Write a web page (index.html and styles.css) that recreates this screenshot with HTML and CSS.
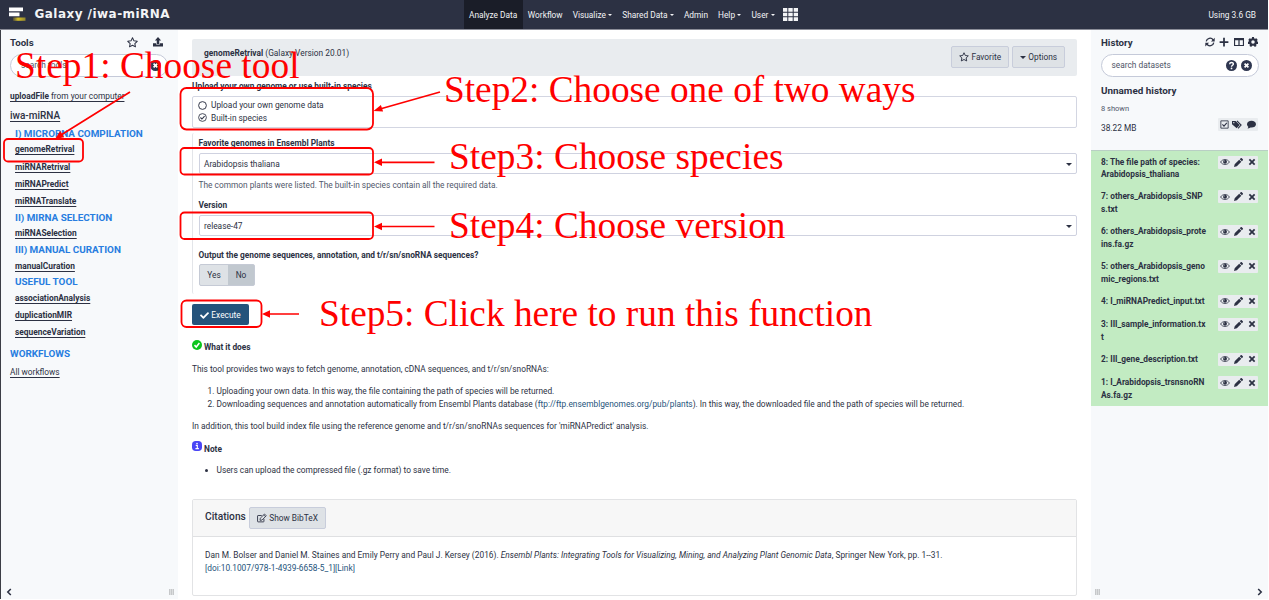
FILE: index.html
```html
<!DOCTYPE html>
<html lang="en">
<head>
<meta charset="utf-8">
<title>Galaxy /iwa-miRNA</title>
<link rel="stylesheet" href="styles.css">
</head>
<body>
<svg class="defs" width="0" height="0" aria-hidden="true">
  <symbol id="star" viewBox="0 0 16 16"><path d="M8 1.2l2.100 4.400 4.800.6-3.500 3.300.9 4.800L8 12l-4.300 2.300.9-4.800L1.100 6.200l4.800-.6z" fill="none" stroke="currentColor" stroke-width="1.500" stroke-linejoin="round"/></symbol>
  <symbol id="upload" viewBox="0 0 16 16"><path d="M8 0l5 5.500H10V11H6V5.500H3zM0 10h5v2h6v-2h5v5H0z" fill="currentColor"/></symbol>
  <symbol id="times-circle" viewBox="0 0 16 16"><path d="M8 0a8 8 0 100 16A8 8 0 008 0zM4.300 6.100l1.800-1.800L8 6.200l1.900-1.900 1.800 1.800L9.800 8l1.900 1.900-1.800 1.800L8 9.800l-1.900 1.900-1.800-1.800L6.200 8z" fill="currentColor" fill-rule="evenodd"/></symbol>
  <symbol id="question" viewBox="0 0 16 16"><circle cx="8" cy="8" r="8" fill="currentColor"/><path d="M5.300 6.200C5.400 2.700 10.800 2.900 10.700 6 10.600 7.700 8 7.600 8 9.800" fill="none" stroke="#fff" stroke-width="2"/><circle cx="8" cy="12.300" r="1.300" fill="#fff"/></symbol>
  <symbol id="refresh" viewBox="0 0 16 16"><path d="M2 7a6.100 6.100 0 0111-2.500M14 9a6.100 6.100 0 01-11 2.500" fill="none" stroke="currentColor" stroke-width="2.100"/><path d="M15.500 1v6H9.500zM.5 15V9h6z" fill="currentColor"/></symbol>
  <symbol id="plus" viewBox="0 0 16 16"><path d="M6.600 1h2.800v5.600H15v2.800H9.400V15H6.600V9.400H1V6.600h5.600z" fill="currentColor"/></symbol>
  <symbol id="columns" viewBox="0 0 16 16"><path d="M0 1.500h16v13H0zM1.800 5.300v7.400H7V5.300zM9 5.300v7.400h5.200V5.300z" fill="currentColor" fill-rule="evenodd"/></symbol>
  <symbol id="cog" viewBox="0 0 16 16"><path d="M6.500 0h3l.5 2.200 1.400.7 2-1 2 2.300-1 2 .3 1 2 .8-.8 3-2 .3-.9 1.200.5 2-2.500 1.400L9.300 14H6.700L5 15.900l-2.500-1.400.5-2-.9-1.200-2-.3-.8-3 2-.8.3-1-1-2 2-2.300 2 1L6 2.200zM8 5.200a2.800 2.800 0 100 5.600 2.800 2.800 0 000-5.600z" fill="currentColor" fill-rule="evenodd"/></symbol>
  <symbol id="check-square" viewBox="0 0 16 16"><path d="M1.500 1.500h13v13h-13z" fill="none" stroke="currentColor" stroke-width="1.500"/><path d="M4.300 7.800l2.800 3 5-5.800" fill="none" stroke="currentColor" stroke-width="1.900"/></symbol>
  <symbol id="tags" viewBox="0 0 20 16"><path d="M0 1.500h6.500L14 9l-5.500 6L0 7.500zM3.300 3.300a1.300 1.300 0 100 2.600 1.300 1.300 0 000-2.600z" fill="currentColor" fill-rule="evenodd"/><path d="M9 1.500L16.500 9 11 15" fill="none" stroke="currentColor" stroke-width="2"/></symbol>
  <symbol id="comment" viewBox="0 0 16 16"><path d="M8 1.500c4.400 0 8 2.600 8 6s-3.600 6-8 6l-1.700-.2C4.600 14.600 2.500 15.200.8 15.200c1-1 1.500-2.200 1.500-3.400C.9 10.700 0 9.200 0 7.500c0-3.400 3.600-6 8-6z" fill="currentColor"/></symbol>
  <symbol id="eye" viewBox="0 0 18 14"><path d="M1 7c3.700-6 12.300-6 16 0-3.700 6-12.300 6-16 0z" fill="none" stroke="currentColor" stroke-width="1.400"/><circle cx="9" cy="6.500" r="3.500" fill="currentColor"/><path d="M7.300 6.300A1.800 1.800 0 019 4.600" fill="none" stroke="#e9ecef" stroke-width=".9"/></symbol>
  <symbol id="pencil" viewBox="0 0 16 16"><path d="M0 16l1.200-5 8-8 3.800 3.800-8 8zM10.200 2L12 .3c.7-.6 1.300-.4 1.800 0l1.900 1.900c.5.600.4 1.300 0 1.800L14 5.800z" fill="currentColor"/></symbol>
  <symbol id="times" viewBox="0 0 16 16"><path d="M4 1.500l4 4 4-4L14.500 4l-4 4 4 4-2.500 2.500-4-4-4 4L1.500 12l4-4-4-4z" fill="currentColor"/></symbol>
  <symbol id="check" viewBox="0 0 512 512"><path d="M173.900 439.400L7.500 273c-10-10-10-26.200 0-36.200l36.200-36.200c10-10 26.200-10 36.200 0L192 312.700 432.100 72.600c10-10 26.200-10 36.200 0l36.200 36.200c10 10 10 26.200 0 36.200L210.100 439.400c-10 10-26.200 10-36.200 0z" fill="currentColor"/></symbol>
  <symbol id="circle" viewBox="0 0 16 16"><circle cx="8" cy="8" r="6.900" fill="none" stroke="currentColor" stroke-width="1.700"/></symbol>
  <symbol id="circle-check" viewBox="0 0 16 16"><circle cx="8" cy="8" r="6.900" fill="none" stroke="currentColor" stroke-width="1.500"/><path d="M4.300 8l2.700 2.700 4.700-5" fill="none" stroke="currentColor" stroke-width="1.900"/></symbol>
  <symbol id="edit" viewBox="0 0 18 16"><path d="M12.500 9.500V14a1 1 0 01-1 1H2a1 1 0 01-1-1V4.500a1 1 0 011-1h6.500" fill="none" stroke="currentColor" stroke-width="1.600"/><path d="M5.800 8.500L13.500.8l3.200 3.200L9 11.700l-3.500.5z" fill="none" stroke="currentColor" stroke-width="1.500"/><path d="M12 2.400L15 5.500" stroke="currentColor" stroke-width="1.500"/></symbol>
  <symbol id="ok" viewBox="0 0 16 16"><circle cx="8" cy="8" r="8" fill="#0bc51c"/><path d="M4 8.200l2.800 3 5-6.500" fill="none" stroke="#fff" stroke-width="2.400"/></symbol>
  <symbol id="info" viewBox="0 0 16 16"><rect width="16" height="16" rx="6" fill="#4a45f5"/><path d="M6 7h2.500v5M5.500 12.200h5.500" fill="none" stroke="#fff" stroke-width="1.800"/><circle cx="8" cy="4" r="1.300" fill="#fff"/></symbol>
  <symbol id="left" viewBox="0 0 10 12"><path d="M8 1L3 6l5 5" fill="none" stroke="currentColor" stroke-width="2.600"/></symbol>
  <symbol id="right" viewBox="0 0 10 12"><path d="M2 1l5 5-5 5" fill="none" stroke="currentColor" stroke-width="2.600"/></symbol>
  <symbol id="grid" viewBox="0 0 15 13"><path d="M0 0h4.300v3.700H0zM5.300 0h4.400v3.700H5.300zM10.700 0H15v3.700h-4.300zM0 4.700h4.300v3.600H0zM5.300 4.700h4.400v3.600H5.300zM10.700 4.700H15v3.600h-4.300zM0 9.300h4.300V13H0zM5.300 9.300h4.400V13H5.300zM10.700 9.300H15V13h-4.300z" fill="currentColor"/></symbol>
  <symbol id="galaxy" viewBox="0 0 18 16"><defs><linearGradient id="gold"><stop offset="0" stop-color="#4d4a3a"/><stop offset=".4" stop-color="#d6bf25"/><stop offset="1" stop-color="#8f832f"/></linearGradient></defs><path d="M0 .5h14v3.700H0zM0 5.500h10.500v3.700H0z" fill="#fff"/><path d="M4 10.500h12.500v3.300H4z" fill="url(#gold)"/></symbol>
</svg>

<div class="app">
  <header class="masthead">
    <div class="brand"><svg class="logo"><use href="#galaxy"/></svg><span>Galaxy /iwa-miRNA</span></div>
    <nav class="menu">
      <a class="tab active">Analyze Data</a>
      <a class="tab">Workflow</a>
      <a class="tab">Visualize<i class="caret"></i></a>
      <a class="tab">Shared Data<i class="caret"></i></a>
      <a class="tab">Admin</a>
      <a class="tab">Help<i class="caret"></i></a>
      <a class="tab">User<i class="caret"></i></a>
      <a class="tab apps"><svg class="grid-icon"><use href="#grid"/></svg></a>
    </nav>
    <div class="quota">Using 3.6 GB</div>
  </header>

  <div class="columns">
    <aside class="panel tools">
      <div class="panel-head"><b>Tools</b><span class="head-icons"><svg class="i11"><use href="#star"/></svg><svg class="i10"><use href="#upload"/></svg></span></div>
      <div class="search"><span>search tools</span><svg class="i11"><use href="#times-circle"/></svg></div>
      <div class="tool-list">
        <a class="upload-link"><b>uploadFile</b> from your computer</a>
        <a class="suite">iwa-miRNA</a>
        <div class="label">I) MICRORNA COMPILATION</div>
        <div class="tool"><a>genomeRetrival</a></div>
        <div class="tool"><a>miRNARetrival</a></div>
        <div class="tool"><a>miRNAPredict</a></div>
        <div class="tool"><a>miRNATranslate</a></div>
        <div class="label">II) MIRNA SELECTION</div>
        <div class="tool"><a>miRNASelection</a></div>
        <div class="label">III) MANUAL CURATION</div>
        <div class="tool"><a>manualCuration</a></div>
        <div class="label">USEFUL TOOL</div>
        <div class="tool"><a>associationAnalysis</a></div>
        <div class="tool"><a>duplicationMIR</a></div>
        <div class="tool"><a>sequenceVariation</a></div>
        <div class="label workflows">WORKFLOWS</div>
        <a class="all">All workflows</a>
      </div>
      <div class="panel-foot"><svg class="chev"><use href="#left"/></svg><i class="grip"></i></div>
    </aside>

    <main class="center">
      <div class="tool-head">
        <div class="tool-title"><b>genomeRetrival</b> (Galaxy Version 20.01)</div>
        <div class="btns"><span class="btn fav"><svg class="i10"><use href="#star"/></svg>Favorite</span><span class="btn opt"><i class="caret"></i>Options</span></div>
      </div>
      <div class="field-label first">Upload your own genome or use built-in species</div>
      <div class="radio-box">
        <div class="radio"><svg class="i9"><use href="#circle"/></svg>Upload your own genome data</div>
        <div class="radio"><svg class="i9"><use href="#circle-check"/></svg>Built-in species</div>
      </div>
      <section class="section">
        <div class="field-label">Favorite genomes in Ensembl Plants</div>
        <div class="select"><span>Arabidopsis thaliana</span><i class="caret"></i></div>
        <div class="help">The common plants were listed. The built-in species contain all the required data.</div>
        <div class="field-label">Version</div>
        <div class="select"><span>release-47</span><i class="caret"></i></div>
        <div class="field-label output">Output the genome sequences, annotation, and t/r/sn/snoRNA sequences?</div>
        <div class="toggle"><span>Yes</span><span class="on">No</span></div>
      </section>
      <div class="execute"><svg class="i9"><use href="#check"/></svg>Execute</div>
      <div class="doc">
        <div class="doc-head"><svg class="i10"><use href="#ok"/></svg><b>What it does</b></div>
        <p>This tool provides two ways to fetch genome, annotation, cDNA sequences, and t/r/sn/snoRNAs:</p>
        <ol>
          <li>Uploading your own data. In this way, the file containing the path of species will be returned.</li>
          <li>Downloading sequences and annotation automatically from Ensembl Plants database (<a>ftp://ftp.ensemblgenomes.org/pub/plants</a>). In this way, the downloaded file and the path of species will be returned.</li>
        </ol>
        <p>In addition, this tool build index file using the reference genome and t/r/sn/snoRNAs sequences for 'miRNAPredict' analysis.</p>
        <div class="doc-head note"><svg class="i10"><use href="#info"/></svg><b>Note</b></div>
        <ul><li>Users can upload the compressed file (.gz format) to save time.</li></ul>
      </div>
      <div class="card">
        <div class="card-head"><span>Citations</span><span class="btn bib"><svg class="i10"><use href="#edit"/></svg>Show BibTeX</span></div>
        <div class="card-body"><span class="cite">Dan M. Bolser and Daniel M. Staines and Emily Perry and Paul J. Kersey (2016). <em>Ensembl Plants: Integrating Tools for Visualizing, Mining, and Analyzing Plant Genomic Data</em>, Springer New York, pp. 1--31.</span><br><a class="doi">[doi:10.1007/978-1-4939-6658-5_1][Link]</a></div>
      </div>
    </main>

    <aside class="panel history">
      <div class="panel-head"><b>History</b><span class="head-icons tight"><svg class="i10"><use href="#refresh"/></svg><svg class="i10"><use href="#plus"/></svg><svg class="i10"><use href="#columns"/></svg><svg class="i10"><use href="#cog"/></svg></span></div>
      <div class="search"><span>search datasets</span><svg class="i11"><use href="#question"/></svg><svg class="i11"><use href="#times-circle"/></svg></div>
      <div class="history-name">Unnamed history</div>
      <div class="shown">8 shown</div>
      <div class="size-row"><span>38.22 MB</span><span class="actions"><svg class="i9"><use href="#check-square"/></svg><svg class="itag"><use href="#tags"/></svg><svg class="i9"><use href="#comment"/></svg></span></div>
      <div class="datasets">
        <div class="ds"><span>8: The file path of species:<br>Arabidopsis_thaliana</span><span class="actions"><svg class="ieye"><use href="#eye"/></svg><svg class="i9"><use href="#pencil"/></svg><svg class="i8"><use href="#times"/></svg></span></div>
        <div class="ds"><span>7: others_Arabidopsis_SNP<br>s.txt</span><span class="actions"><svg class="ieye"><use href="#eye"/></svg><svg class="i9"><use href="#pencil"/></svg><svg class="i8"><use href="#times"/></svg></span></div>
        <div class="ds"><span>6: others_Arabidopsis_prote<br>ins.fa.gz</span><span class="actions"><svg class="ieye"><use href="#eye"/></svg><svg class="i9"><use href="#pencil"/></svg><svg class="i8"><use href="#times"/></svg></span></div>
        <div class="ds"><span>5: others_Arabidopsis_geno<br>mic_regions.txt</span><span class="actions"><svg class="ieye"><use href="#eye"/></svg><svg class="i9"><use href="#pencil"/></svg><svg class="i8"><use href="#times"/></svg></span></div>
        <div class="ds one"><span>4: I_miRNAPredict_input.txt</span><span class="actions"><svg class="ieye"><use href="#eye"/></svg><svg class="i9"><use href="#pencil"/></svg><svg class="i8"><use href="#times"/></svg></span></div>
        <div class="ds"><span>3: III_sample_information.tx<br>t</span><span class="actions"><svg class="ieye"><use href="#eye"/></svg><svg class="i9"><use href="#pencil"/></svg><svg class="i8"><use href="#times"/></svg></span></div>
        <div class="ds one"><span>2: III_gene_description.txt</span><span class="actions"><svg class="ieye"><use href="#eye"/></svg><svg class="i9"><use href="#pencil"/></svg><svg class="i8"><use href="#times"/></svg></span></div>
        <div class="ds"><span>1: I_Arabidopsis_trsnsnoRN<br>As.fa.gz</span><span class="actions"><svg class="ieye"><use href="#eye"/></svg><svg class="i9"><use href="#pencil"/></svg><svg class="i8"><use href="#times"/></svg></span></div>
      </div>
      <div class="panel-foot"><i class="grip"></i><svg class="chev"><use href="#right"/></svg></div>
    </aside>
  </div>

  <!-- Tutorial callouts drawn over the page -->
  <svg class="callouts" viewBox="0 0 1269 600">
    <g class="frames">
      <rect x="4" y="139" width="79" height="22.500" rx="4"/>
      <rect x="180.500" y="88" width="192.500" height="41.500" rx="6"/>
      <rect x="180.500" y="148" width="192.500" height="26.500" rx="4"/>
      <rect x="180.500" y="212.500" width="192.500" height="26.500" rx="4"/>
      <rect x="181.500" y="300.500" width="80" height="26.500" rx="5"/>
    </g>
    <g class="shafts">
      <path d="M130 92L61 135M440 92L380 109M434.500 162.300H380M434.500 226.500H380M299 314H268"/>
    </g>
    <g class="heads">
      <path d="M55 139l5.200-8 4 6.200zM373.500 111l7.400-6 2.200 6.600zM374 162.300l8-3.800v7.600zM374 226.500l8-3.800v7.600zM262 314l8-3.800v7.600z"/>
    </g>
    <g class="steps">
      <text x="15" y="78" textLength="284.500">Step1: Choose tool</text>
      <text x="444" y="102" textLength="471.500">Step2: Choose one of two ways</text>
      <text x="449" y="169" textLength="334.500">Step3: Choose species</text>
      <text x="449" y="238" textLength="336.500">Step4: Choose version</text>
      <text x="319" y="326" textLength="553.500">Step5: Click here to run this function</text>
    </g>
  </svg>
</div>
</body>
</html>
```
FILE: styles.css
```css
* { box-sizing: border-box; }
body { margin: 0; background: #fff; color: #2c3143; font: 8.34px/12.5px Roboto, "Liberation Sans", sans-serif; }
svg { display: block; flex: none; }
.defs { position: absolute; }
b { font-weight: 700; }
.app { position: relative; width: 1268px; height: 599px; overflow: hidden; display: flex; flex-direction: column; }
.i8 { width: 8px; height: 8px; }
.i9 { width: 9px; height: 9px; }
.i10 { width: 10px; height: 10px; }
.i11 { width: 11px; height: 11px; }
.ieye { width: 10px; height: 8px; }
.itag { width: 11px; height: 9px; }
.caret { display: inline-block; border: solid transparent; border-width: 3px 3px 0; border-top-color: currentColor; }

.masthead { height: 30px; flex: none; display: grid; grid-template-columns: 464px 1fr auto; align-items: center; background: #2c3143; border-bottom: 1px solid #8b8d98; color: #f3f4f6; }
.brand { display: flex; align-items: center; gap: 7.500px; padding-left: 9px; font: bold 12px/14px "DejaVu Sans", sans-serif; letter-spacing: .46px; }
.brand span { margin-top: -2px; }
.logo { width: 18px; height: 16px; margin-top: 1px; }
.menu { display: flex; height: 29px; }
.tab { display: flex; align-items: center; padding: 1px 5px 0; }
.tab .caret { margin-left: 2.400px; border-width: 2px 2px 0; }
.active { background: #1a1d28; padding-right: 5.500px; }
.grid-icon { width: 15px; height: 13px; }
.apps { margin-left: -2px; padding-top: 0; }
.quota { padding: 2px 12px 0 0; }

.columns { flex: 1; display: grid; grid-template-columns: 178px 913px 177px; min-height: 0; }
.panel { display: flex; flex-direction: column; background: #f7f9fb; }
.tools { border-left: 1px solid #3c3e46; padding-left: 9px; }
.panel-head { height: 24px; display: flex; align-items: center; justify-content: space-between; padding-top: 1px; font-size: 9.700px; }
.panel-head b { padding-top: 1px; }
.tools .panel-head { padding-right: 15px; }
.head-icons { display: flex; align-items: center; gap: 15px; margin-top: -1px; }
.tight { gap: 4.300px; }
.search { height: 23px; width: 158px; display: flex; align-items: center; gap: 4px; padding: 0 6px 0 10px; border: 1px solid #c5cad9; border-radius: 12px; background: #fff; color: #4e5467; }
.search span { flex: 1; }
.search svg { color: #2f3750; }
.tool-list { display: flex; flex-direction: column; align-items: flex-start; padding-top: 12px; }
.tool-list a { text-decoration: underline; text-decoration-thickness: 1px; text-underline-offset: 1.500px; }
.upload-link { height: 14px; line-height: 15px; }
.suite { font-size: 10px; font-weight: 500; height: 19px; line-height: 25px; margin-bottom: 3.500px; }
.label { padding-left: 5px; height: 14.900px; line-height: 15px; font-size: 9.900px; font-weight: 700; color: #277de0; }
.tool { padding-left: 5px; height: 17.300px; line-height: 18.400px; font-weight: 700; font-size: 8.400px; }
.workflows { padding-left: 0; margin-top: 5px; }
.all { margin-top: 5px; }
.panel-foot { margin-top: auto; height: 15px; display: flex; align-items: center; justify-content: space-between; padding: 0 4px 0 5px; }
.tools .panel-foot { margin-left: -9px; }
.chev { width: 6px; height: 8px; }
.grip { width: 5px; height: 6px; background: repeating-linear-gradient(90deg, #c6c8ca 0 1px, #dcdedf 1px 2px); }

.center { padding: 9px 14px 0; display: flex; flex-direction: column; align-items: stretch; }
.tool-head { height: 37px; display: flex; justify-content: space-between; padding: 7px 12px 0; background: #e9ecef; border-radius: 2px; }
.tool-title { line-height: 14px; letter-spacing: .01px; }
.btns { display: flex; gap: 3px; }
.btn { height: 22px; display: flex; align-items: center; justify-content: center; gap: 2.500px; background: #dee2e6; border: 1px solid #c8cddb; border-radius: 2px; }
.fav { width: 58px; }
.opt { width: 53px; }
.field-label { font-weight: 700; margin-left: -.5px; }
.first { height: 20px; line-height: 20px; margin-left: 0; }
.radio-box { height: 32px; border: 1px solid #d3d6e2; border-radius: 2px; padding: 2px 4.500px; }
.radio { display: flex; align-items: center; gap: 4.500px; height: 12.600px; }
.section { margin-top: 5px; height: 161px; padding: 4px 0 0 6px; border-left: 1px solid #e3e5e9; border-radius: 2px; }
.select { margin: 3.500px 0 5px; height: 21px; display: flex; align-items: center; justify-content: space-between; padding: 1px 4px 0; border: 1px solid #cfd2e0; border-radius: 2px; }
.help { color: #51586b; margin: 0 0 7.500px -.5px; }
.output { margin-top: 12.500px; }
.toggle { display: flex; width: 56px; height: 22px; margin-top: 3px; border: 1px solid #c5cad5; border-radius: 2px; background: #dee2e6; line-height: 20px; text-align: center; }
.toggle span { width: 28px; }
.toggle .on { width: 26px; background: #c1c8cf; }
.execute { margin-top: 10px; width: 57px; height: 21px; display: flex; align-items: center; justify-content: center; gap: 2px; padding-top: 1px; background: #25537b; border-radius: 2px; color: #fff; }
.doc { height: 174px; padding-top: 14px; }
.doc p, .doc ol, .doc ul { margin: 0 0 9.800px; }
.doc ol, .doc ul { padding-left: 24.500px; }
.doc-head { display: flex; gap: 2px; height: 24px; }
.doc-head svg { margin-top: .5px; }
.doc-head b { padding-top: 2px; }
.note { height: 23.500px; margin-top: -1.500px; }
.doc a, .doi { color: #25537b; }
.card { height: 97px; border: 1px solid #e2e3e5; border-radius: 2px; }
.card-head { height: 37px; display: flex; align-items: center; gap: 3px; padding-left: 12px; background: #f7f7f7; border-bottom: 1px solid #dfe0e2; font-size: 10.200px; font-weight: 500; }
.card-head span:first-child { margin-top: -1px; }
.bib { width: 77px; font-size: 8.340px; font-weight: 400; }
.card-body { padding: 12px; white-space: nowrap; }
.cite { letter-spacing: .02px; }

.history { padding-left: 10px; }
.history .panel-head { padding-right: 10px; }
.history .search { width: 158px; padding-left: 9.500px; }
.history-name { height: 26px; line-height: 27px; font-size: 9.900px; font-weight: 700; }
.shown { height: 12px; line-height: 12px; font-size: 7.500px; color: #51586b; }
.size-row { height: 35px; padding: 3px 10px 0 0; display: flex; justify-content: space-between; }
.size-row > span:first-child { padding-top: 4px; }
.actions { width: 40px; height: 13px; display: flex; align-items: center; justify-content: space-between; padding: 0 2.500px 0 2px; background: #e9ecef; border-radius: 1px; color: #2c3143; }
.datasets { margin-left: -10px; border-top: 1px solid #b9cfc4; background: #c2ebc2; font-weight: 700; line-height: 12.700px; }
.ds { display: flex; justify-content: space-between; height: 34.800px; padding: 4.500px 10px 0 10px; }
.one { height: 23.300px; }
.history .panel-foot { margin-left: -10px; padding: 0 5px 0 4px; }

.callouts { position: absolute; left: 0; top: 0; width: 1269px; height: 600px; }
.frames { fill: none; stroke: #f00; stroke-width: 1.800; }
.shafts { fill: none; stroke: #f00; stroke-width: 1.700; }
.heads { fill: #f00; }
.steps { fill: #f00; font: 37.300px "Liberation Serif", serif; }
```
